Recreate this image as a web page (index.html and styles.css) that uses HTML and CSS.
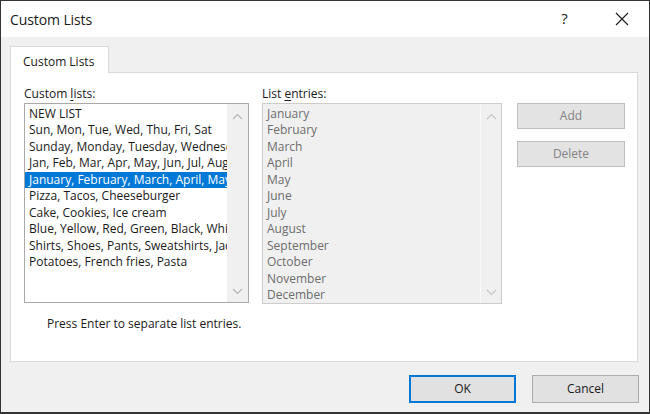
FILE: index.html
```html
<!DOCTYPE html>
<html>
<head>
<meta charset="utf-8">
<link rel="stylesheet" href="styles.css">
</head>
<body>
<div class="window">
  <div class="titlebar">
    <div class="title">Custom Lists</div>
    <div class="controls">
      <span class="help">?</span>
      <span class="close"><svg width="14" height="14" viewBox="0 0 14 14"><path d="M1 1 L13 13 M13 1 L1 13" stroke="#1a1a1a" stroke-width="1.1" fill="none"/></svg></span>
    </div>
  </div>
  <div class="content">
    <div class="tabs"><div class="tab">Custom Lists</div></div>
    <div class="panel">
      <div class="col left">
        <div class="label">Custom <u>l</u>ists:</div>
        <div class="listbox">
          <div class="items">
            <div class="item">NEW LIST</div>
            <div class="item">Sun, Mon, Tue, Wed, Thu, Fri, Sat</div>
            <div class="item">Sunday, Monday, Tuesday, Wednesday, Thursday, Friday, Saturday</div>
            <div class="item">Jan, Feb, Mar, Apr, May, Jun, Jul, Aug, Sep, Oct, Nov, Dec</div>
            <div class="item selected">January, February, March, April, May, June</div>
            <div class="item">Pizza, Tacos, Cheeseburger</div>
            <div class="item">Cake, Cookies, Ice cream</div>
            <div class="item">Blue, Yellow, Red, Green, Black, White</div>
            <div class="item">Shirts, Shoes, Pants, Sweatshirts, Jackets</div>
            <div class="item">Potatoes, French fries, Pasta</div>
          </div>
          <div class="scroll">
            <svg class="chev" width="11" height="7" viewBox="0 0 11 7"><path d="M1 6 L5.5 1.5 L10 6" stroke="#b4b4b4" stroke-width="1.1" fill="none"/></svg>
            <svg class="chev" width="11" height="7" viewBox="0 0 11 7"><path d="M1 1 L5.5 5.5 L10 1" stroke="#b4b4b4" stroke-width="1.1" fill="none"/></svg>
          </div>
        </div>
        <div class="hint">Press Enter to separate list entries.</div>
      </div>
      <div class="col right">
        <div class="label">List <u>e</u>ntries:</div>
        <div class="listbox disabled">
          <div class="items">
            <div class="item">January</div>
            <div class="item">February</div>
            <div class="item">March</div>
            <div class="item">April</div>
            <div class="item">May</div>
            <div class="item">June</div>
            <div class="item">July</div>
            <div class="item">August</div>
            <div class="item">September</div>
            <div class="item">October</div>
            <div class="item">November</div>
            <div class="item">December</div>
          </div>
          <div class="scroll">
            <svg class="chev" width="11" height="7" viewBox="0 0 11 7"><path d="M1 6 L5.5 1.5 L10 6" stroke="#c4c4c4" stroke-width="1.1" fill="none"/></svg>
            <svg class="chev" width="11" height="7" viewBox="0 0 11 7"><path d="M1 1 L5.5 5.5 L10 1" stroke="#c4c4c4" stroke-width="1.1" fill="none"/></svg>
          </div>
        </div>
      </div>
      <div class="col buttons">
        <div class="btn disabled">Add</div>
        <div class="btn disabled">Delete</div>
      </div>
    </div>
    <div class="footer">
      <div class="btn big default">OK</div>
      <div class="btn big">Cancel</div>
    </div>
  </div>
</div>
</body>
</html>
```

FILE: styles.css
```css
* { box-sizing: border-box; }
html, body { margin: 0; padding: 0; }
body {
  width: 650px;
  height: 414px;
  font-family: "Open Sans", "Noto Sans", sans-serif;
  font-size: 12px;
  color: #1a1a1a;
  background: #fff;
}
.window {
  width: 650px;
  height: 414px;
  border: 1px solid #333;
  border-bottom-width: 2px;
  display: flex;
  flex-direction: column;
  background: #f0f0f0;
}
.titlebar {
  height: 36px;
  background: #fff;
  display: flex;
  align-items: center;
  justify-content: space-between;
  padding-left: 9px;
  flex: none;
}
.title {
  font-size: 14px;
  letter-spacing: -0.1px;
  color: #1a1a1a;
  padding-top: 1px;
}
.controls {
  display: flex;
  align-items: center;
  height: 100%;
}
.help {
  font-size: 15px;
  width: 58px;
  text-align: center;
  padding-bottom: 2px;
  padding-right: 3px;
}
.close {
  width: 54px;
  display: flex;
  justify-content: center;
  padding-right: 1px;
}
.content {
  flex: 1;
  padding: 9px 0 0 9px;
  display: flex;
  flex-direction: column;
}
.tabs { display: flex; height: 26px; }
.tab {
  width: 99px;
  height: 27px;
  background: #fff;
  border: 1px solid #d9d9d9;
  border-bottom: none;
  padding-left: 12px;
  padding-top: 2px;
  line-height: 25px;
  position: relative;
  z-index: 1;
}
.panel {
  width: 628px;
  height: 290px;
  background: #fff;
  border: 1px solid #d9d9d9;
  display: flex;
  padding: 11px 0 0 13px;
}
.col { display: flex; flex-direction: column; }
.left { width: 225px; }
.right { width: 240px; margin-left: 13px; }
.buttons { width: 108px; margin-left: 15px; padding-top: 19px; gap: 12px; }
.label { height: 19px; line-height: 19px; }
.label u { text-underline-offset: 2px; }
.listbox {
  display: flex;
  border: 1px solid #a9a9a9;
  background: #fff;
  height: 200px;
  overflow: hidden;
}
.listbox.disabled {
  border-color: #cccccc;
  background: #f0f0f0;
  height: 201px;
  color: #6d6d6d;
}
.items { flex: 1; padding-top: 1.5px; overflow: hidden; min-width: 0; }
.item {
  height: 16.5px;
  line-height: 16.5px;
  padding-left: 4px;
  white-space: nowrap;
  overflow: hidden;
}
.item.selected { background: #0078d7; color: #fff; }
.scroll {
  width: 21px;
  flex: none;
  background: #f0f0f0;
  display: flex;
  flex-direction: column;
  justify-content: space-between;
  align-items: center;
  padding: 9px 0 7px;
}
.disabled .scroll { border-left: 1px solid #fafafa; }
.chev { display: block; }
.hint { margin-left: 23px; margin-top: 12px; }
.btn {
  height: 26px;
  border: 1px solid #adadad;
  background: #e1e1e1;
  text-align: center;
  line-height: 24px;
  color: #1a1a1a;
}
.btn.disabled { color: #838383; border-color: #bfbfbf; background: #e3e3e3; }
.footer {
  display: flex;
  justify-content: flex-end;
  gap: 16px;
  padding: 13px 10px 0 0;
}
.btn.big { width: 107px; height: 28px; line-height: 26px; }
.btn.default { border: 2px solid #0078d7; line-height: 24px; }
```
